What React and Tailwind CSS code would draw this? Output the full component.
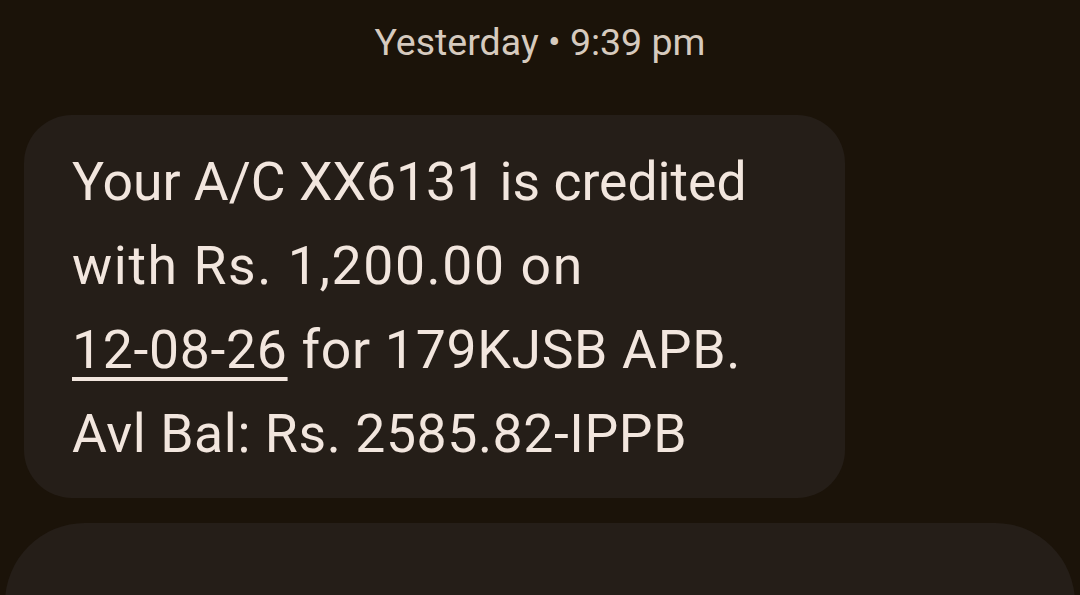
export default function App() {
  return (
    <div className="w-[1080px] h-[595px] overflow-hidden bg-[#1b1309] flex flex-col" style={{ fontFamily: 'Roboto, "Noto Sans", sans-serif' }}>
      <div className="shrink-0 pt-[21px] h-[115px] text-center text-[37.5px] leading-[42px] text-[#d6cabe]">
        Yesterday • 9:39 pm
      </div>
      <div className="shrink-0 pl-[24px]">
        <div className="w-[821px] h-[383px] rounded-[48px] bg-[#251e18] pl-[48px] pt-[25px] text-[53.5px] leading-[84px] text-[#f2e6de]">
          <p>Your A/C XX6131 is credited</p>
          <p className="tracking-[1.6px]">with Rs. 1,200.00 on</p>
          <p className="tracking-[0.7px]">
            <span className="underline decoration-[4px] underline-offset-[9px]">12-08-26</span> for 179KJSB APB.
          </p>
          <p className="tracking-[0.6px]">Avl Bal: Rs. 2585.82-IPPB</p>
        </div>
      </div>
      <div className="shrink-0 mt-[25px] mx-[5px] h-[120px] rounded-t-[80px] bg-[#251e18]" />
    </div>
  )
}
